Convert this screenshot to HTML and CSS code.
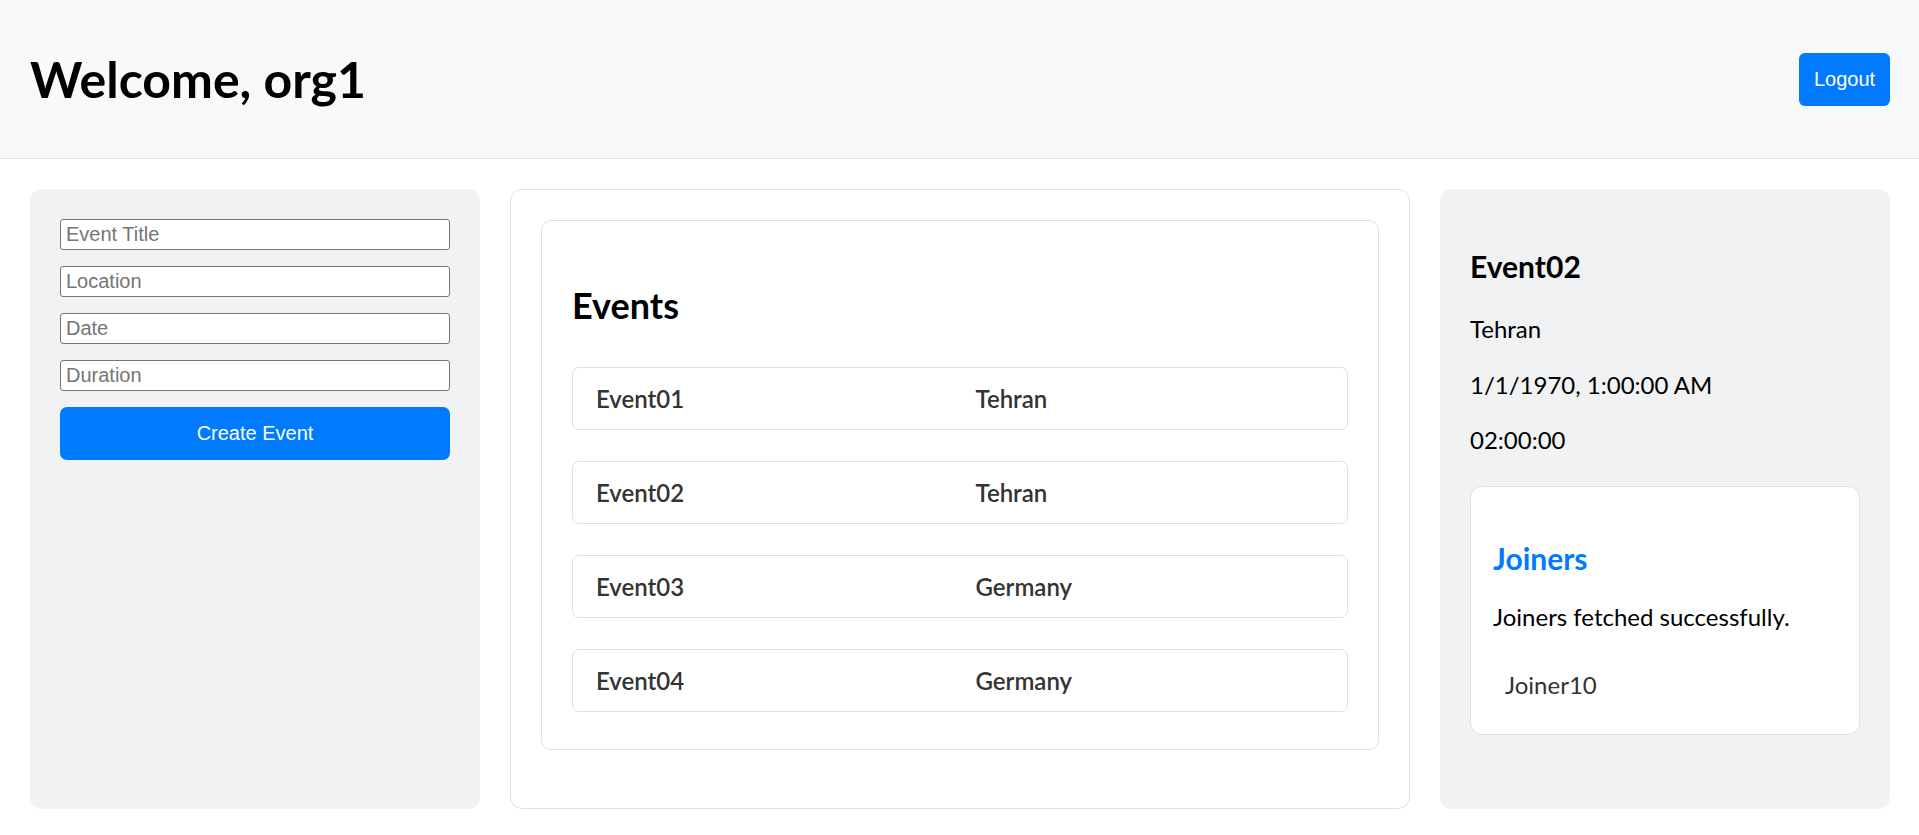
FILE: index.html
```html
<!DOCTYPE html>
<html lang="en">
<head>
<meta charset="utf-8">
<title>Dashboard</title>
<link rel="stylesheet" href="styles.css">
</head>
<body>
<header class="topbar">
  <h1 class="welcome">Welcome, org1</h1>
  <button class="btn logout">Logout</button>
</header>
<main class="layout">
  <section class="panel panel-form">
    <input class="field" type="text" placeholder="Event Title">
    <input class="field" type="text" placeholder="Location">
    <input class="field" type="text" placeholder="Date">
    <input class="field" type="text" placeholder="Duration">
    <button class="btn create">Create Event</button>
  </section>
  <section class="panel panel-events">
    <div class="events-card">
      <h2 class="events-title">Events</h2>
      <div class="event-list">
        <div class="event-row"><span>Event01</span><span>Tehran</span></div>
        <div class="event-row"><span>Event02</span><span>Tehran</span></div>
        <div class="event-row"><span>Event03</span><span>Germany</span></div>
        <div class="event-row"><span>Event04</span><span>Germany</span></div>
      </div>
    </div>
  </section>
  <section class="panel panel-detail">
    <h3 class="detail-title">Event02</h3>
    <p class="detail-line">Tehran</p>
    <p class="detail-line">1/1/1970, 1:00:00 AM</p>
    <p class="detail-line">02:00:00</p>
    <div class="joiners-card">
      <h3 class="joiners-title">Joiners</h3>
      <p class="joiners-msg">Joiners fetched successfully.</p>
      <ul class="joiners-list">
        <li>Joiner10</li>
      </ul>
    </div>
  </section>
</main>
</body>
</html>
```
FILE: styles.css
```css
* { box-sizing: border-box; }
html, body { margin: 0; padding: 0; }
body {
  font-family: Lato, "Noto Sans", sans-serif;
  background: #ffffff;
  color: #000;
}
.topbar {
  height: 159px;
  background: #f8f9fa;
  border-bottom: 1px solid #dee2e6;
  display: flex;
  align-items: center;
  justify-content: space-between;
  padding: 0 29px 0 30px;
}
.welcome {
  margin: 0;
  font-size: 50px;
  font-weight: 700;
  line-height: 50px;
}
.btn {
  font-family: "Liberation Sans", Arial, sans-serif;
  font-size: 20px;
  color: #fff;
  background: #007bff;
  border: none;
  cursor: pointer;
}
.logout {
  width: 91px;
  height: 53px;
  border-radius: 6px;
  padding: 0;
}
.layout {
  display: grid;
  grid-template-columns: 450px 1fr 450px;
  column-gap: 30px;
  padding: 30px 29px 0 30px;
  min-height: 620px;
  height: 650px;
}
.panel {
  border-radius: 12px;
  padding: 30px;
}
.panel-form, .panel-detail {
  background: #f1f2f4;
}
.field {
  display: block;
  width: 100%;
  height: 31px;
  margin: 0 0 16px;
  padding: 0 5px;
  border: 1px solid #767676;
  border-radius: 3px;
  background: #fff;
  font-family: "Liberation Sans", Arial, sans-serif;
  font-size: 20px;
  color: #000;
}
.field::placeholder { color: #757575; }
.create {
  display: block;
  width: 100%;
  height: 53px;
  border-radius: 7px;
}
.panel-events {
  background: #fff;
  border: 1px solid #e0e0e0;
}
.events-card {
  border: 1px solid #e0e0e0;
  border-radius: 10px;
  padding: 30px;
}
.events-title {
  margin: 33px 0 40px;
  font-size: 36px;
  line-height: 43px;
  font-weight: 700;
}
.event-list {
  display: flex;
  flex-direction: column;
  gap: 31px;
  padding-bottom: 7px;
}
.event-row {
  display: grid;
  grid-template-columns: 1fr 1fr;
  column-gap: 31px;
  align-items: center;
  height: 63px;
  padding: 0 23px;
  border: 1px solid #e0e0e0;
  border-radius: 7px;
  font-size: 24px;
  font-weight: 600;
  color: #333;
}
.detail-title {
  margin: 29px 0 29px;
  font-size: 30px;
  line-height: 36px;
  font-weight: 700;
}
.detail-line {
  margin: 0 0 23.5px;
  font-size: 24px;
  line-height: 32px;
}
.detail-line:last-of-type { margin-bottom: 30px; }
.joiners-card {
  background: #fff;
  border: 1px solid #e0e0e0;
  border-radius: 12px;
  padding: 22px 22px 22px 22px;
}
.joiners-title {
  margin: 31px 0 25px;
  font-size: 30px;
  line-height: 36px;
  font-weight: 700;
  color: #007bff;
}
.joiners-msg {
  margin: 0 0 36px;
  font-size: 24px;
  line-height: 32px;
}
.joiners-list {
  list-style: none;
  margin: 0 0 11px;
  padding: 0 0 0 12px;
  font-size: 24px;
  line-height: 32px;
  color: #333;
}
```
